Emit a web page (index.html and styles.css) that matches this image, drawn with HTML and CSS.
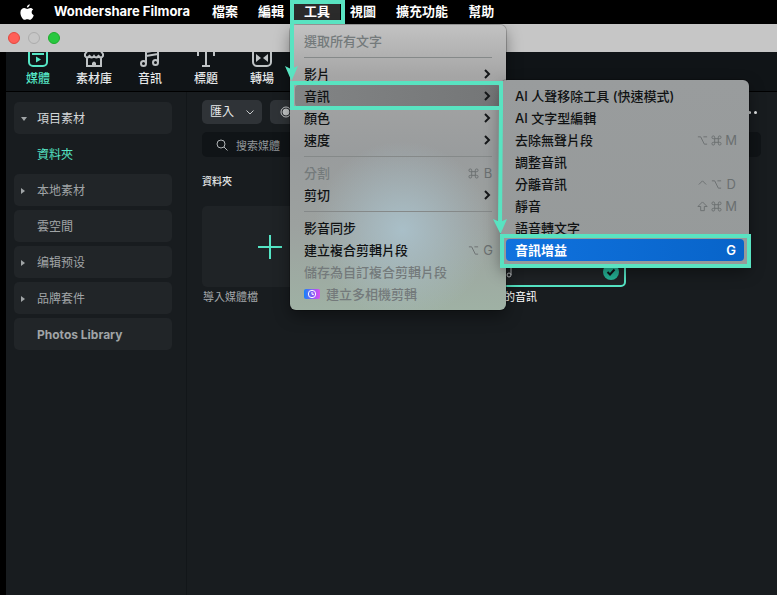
FILE: index.html
```html
<!DOCTYPE html>
<html lang="zh-Hant">
<head>
<meta charset="utf-8">
<title>Wondershare Filmora</title>
<link rel="stylesheet" href="styles.css">
</head>
<body>
<nav class="menubar">
  <svg class="apple" viewBox="0 0 14 17"><path d="M9.8 0.3C9.9 1.6 8.800 3.500 6.900 3.500C6.700 2.100 8 .5 9.800 .3ZM13.200 5.600C11 7 11.300 10.100 13.700 11.200C13.200 12.800 11.700 15.800 10 15.800C8.900 15.800 8.500 15.200 7.300 15.200C6.100 15.200 5.600 15.800 4.600 15.800C2.900 15.800 .4 12.200 .4 8.700C.4 5.600 2.400 4.100 4.300 4.100C5.500 4.100 6.400 4.900 7.200 4.900C8 4.900 9 4 10.500 4C11.500 4 12.600 4.600 13.200 5.600Z"/></svg>
  <button class="app-name">Wondershare Filmora</button>
  <button>檔案</button>
  <button>編輯</button>
  <div class="menu-host">
    <button class="open">工具</button>
    <div class="menu tools">
      <button class="row off">選取所有文字</button>
      <hr>
      <button class="row">影片<svg class="chev" viewBox="0 0 6 10"><path d="M1 1l4 4-4 4"/></svg></button>
      <div class="sub-host">
        <button class="row hover">音訊<svg class="chev" viewBox="0 0 6 10"><path d="M1 1l4 4-4 4"/></svg></button>
        <div class="menu audio">
          <button class="row">AI 人聲移除工具 (快速模式)</button>
          <button class="row">AI 文字型編輯</button>
          <button class="row">去除無聲片段<kbd><svg class="key" viewBox="0 0 12 12"><path d="M1 2h3l4 8h3M7 2h4"/></svg><svg class="key" viewBox="0 0 12 12"><path d="M4 4h4v4H4zM4 4H2.500A1.500 1.500 0 1 1 4 2.500zM8 4V2.500A1.500 1.500 0 1 1 9.500 4zM8 8h1.500A1.500 1.500 0 1 1 8 9.500zM4 8v1.500A1.500 1.500 0 1 1 2.500 8z"/></svg><span>M</span></kbd></button>
          <button class="row">調整音訊</button>
          <button class="row">分離音訊<kbd><svg class="key" viewBox="0 0 12 12"><path d="M2 6l4-4 4 4"/></svg><svg class="key" viewBox="0 0 12 12"><path d="M1 2h3l4 8h3M7 2h4"/></svg><span>D</span></kbd></button>
          <button class="row">靜音<kbd><svg class="key" viewBox="0 0 12 12"><path d="M6 1l5 5H8v4.500H4V6H1z"/></svg><svg class="key" viewBox="0 0 12 12"><path d="M4 4h4v4H4zM4 4H2.500A1.500 1.500 0 1 1 4 2.500zM8 4V2.500A1.500 1.500 0 1 1 9.500 4zM8 8h1.500A1.500 1.500 0 1 1 8 9.500zM4 8v1.500A1.500 1.500 0 1 1 2.500 8z"/></svg><span>M</span></kbd></button>
          <button class="row">語音轉文字</button>
          <button class="row selected">音訊增益<kbd><span>G</span></kbd></button>
        </div>
      </div>
      <button class="row">顏色<svg class="chev" viewBox="0 0 6 10"><path d="M1 1l4 4-4 4"/></svg></button>
      <button class="row">速度<svg class="chev" viewBox="0 0 6 10"><path d="M1 1l4 4-4 4"/></svg></button>
      <hr>
      <button class="row off">分割<kbd><svg class="key" viewBox="0 0 12 12"><path d="M4 4h4v4H4zM4 4H2.500A1.500 1.500 0 1 1 4 2.500zM8 4V2.500A1.500 1.500 0 1 1 9.500 4zM8 8h1.500A1.500 1.500 0 1 1 8 9.500zM4 8v1.500A1.500 1.500 0 1 1 2.500 8z"/></svg><span>B</span></kbd></button>
      <button class="row">剪切<svg class="chev" viewBox="0 0 6 10"><path d="M1 1l4 4-4 4"/></svg></button>
      <hr>
      <button class="row">影音同步</button>
      <button class="row">建立複合剪輯片段<kbd><svg class="key" viewBox="0 0 12 12"><path d="M1 2h3l4 8h3M7 2h4"/></svg><span>G</span></kbd></button>
      <button class="row off">儲存為自訂複合剪輯片段</button>
      <button class="row off"><svg class="multicam" viewBox="0 0 16 10"><defs><linearGradient id="mc"><stop stop-color="#1482fa"/><stop offset=".5" stop-color="#8060f5"/><stop offset="1" stop-color="#e04df0"/></linearGradient></defs><rect width="16" height="10" rx="2" fill="url(#mc)"/><circle cx="8" cy="5" r="3.700" fill="none" stroke="#fff"/><path d="M8 3v2.300h2" fill="none" stroke="#fff"/></svg>建立多相機剪輯</button>
    </div>
    <svg class="guides" viewBox="0 0 470 275">
      <g fill="none" stroke="#59e3c1" stroke-width="4">
        <path d="M2 2h51v20H2zM2 20v52M2 83h209v25H2zM211 106l-1 120M212 236h247v30H212z"/>
      </g>
      <path fill="#59e3c1" d="M-5 66l6 3 7-3-6.500 15zM203 219l7 3 7-3-6.500 15z"/>
    </svg>
  </div>
  <button>視圖</button>
  <button>擴充功能</button>
  <button>幫助</button>
</nav>
<header class="titlebar"><i class="light close"></i><i class="light"></i><i class="light zoom"></i></header>
<div class="app">
  <nav class="tabs">
    <button class="tab active"><svg viewBox="0 0 22 20"><rect x="2" y="1" width="18" height="17" rx="4"/><path d="M5 6h12"/><path class="solid" d="M9 8.500l5 3-5 3z"/></svg>媒體</button>
    <button class="tab"><svg viewBox="0 0 22 20"><path d="M4 9v9h14V9M5 2h12l3 4v2q-2 3-4.500 0Q13 11 11 8 9 11 6.500 8 4 11 2 8V6z"/><path class="solid" d="M9 18v-3q2-3 4 0v3z"/></svg>素材庫</button>
    <button class="tab"><svg viewBox="0 0 22 20"><path d="M7 15V4l12-2v12M7 8l12-2"/><circle cx="4.500" cy="15.500" r="2.500"/><circle cx="16.500" cy="14.500" r="2.500"/></svg>音訊</button>
    <button class="tab"><svg viewBox="0 0 22 20"><path d="M3 8V3h16v5M11 3v15M7 18h8"/></svg>標題</button>
    <button class="tab"><svg viewBox="0 0 22 20"><rect x="2" y="1" width="18" height="17" rx="4"/><path class="solid" d="M5 6l5 4-5 4zM17 6l-5 4 5 4z"/></svg>轉場</button>
  </nav>
  <div class="body">
    <aside class="sidebar">
      <button class="folder lit"><i class="tri down"></i>項目素材</button>
      <button class="folder current"><i class="tri none"></i>資料夾</button>
      <button class="folder"><i class="tri"></i>本地素材</button>
      <button class="folder"><i class="tri none"></i>雲空間</button>
      <button class="folder"><i class="tri"></i>编辑预设</button>
      <button class="folder"><i class="tri"></i>品牌套件</button>
      <button class="folder latin"><i class="tri none"></i>Photos Library</button>
    </aside>
    <main class="library">
      <div class="actions">
        <button class="chip">匯入<svg viewBox="0 0 8 5"><path d="M.5.500L4 4 7.500.500"/></svg></button>
        <button class="chip record" aria-label="錄製"><svg viewBox="0 0 12 12"><circle cx="6" cy="6" r="5"/><circle class="dot" cx="6" cy="6" r="3"/></svg></button>
        <button class="more" aria-label="更多"><i></i><i></i><i></i></button>
      </div>
      <label class="search"><svg viewBox="0 0 12 12"><circle cx="5" cy="5" r="4"/><path d="M8 8l3.500 3.500"/></svg><input type="text" placeholder="搜索媒體"></label>
      <h2>資料夾</h2>
      <div class="grid">
        <figure><div class="thumb add"><svg viewBox="0 0 24 24"><path d="M0 12h24M12 0v24"/></svg></div><figcaption>導入媒體檔</figcaption></figure>
        <figure></figure>
        <figure class="clip"><div class="thumb"><svg class="note" viewBox="0 0 8 10"><circle cx="3" cy="7" r="2"/><path d="M5 7V0"/></svg><svg class="check" viewBox="0 0 16 16"><circle cx="8" cy="8" r="8"/><path d="M4.500 8l2.500 2.500 4.500-5"/></svg></div><figcaption>我的音訊</figcaption></figure>
      </div>
    </main>
  </div>
</div>
</body>
</html>
```
FILE: styles.css
```css
* { box-sizing: border-box; }
body {
  margin: 0;
  min-height: 100vh;
  display: flex;
  flex-direction: column;
  background: #000;
  color: #e6e8e9;
  font: 12px/16px Inter, "Noto Sans CJK TC", sans-serif;
  overflow: hidden;
}
button { margin: 0; padding: 0; border: 0; background: none; color: inherit; font: inherit; text-align: left; white-space: nowrap; }
svg { flex: none; overflow: visible; }

.menubar { display: flex; align-items: center; height: 24px; padding-left: 20px; font-size: 13px; font-weight: 700; color: #fff; }
.menubar > button { padding: 0 10px 2px; }
.menubar > .app-name { padding-right: 12px; }
.apple { width: 14px; height: 17px; margin-right: 10px; fill: #fff; }
.menu-host { position: relative; height: 24px; padding: 3px 0; }
.open { padding: 0 10px 2px; background: #2b2b2b; }

.menu { position: absolute; z-index: 2; padding: 5px; border-radius: 6px; color: #101213; font-weight: 500; box-shadow: 0 0 0 1px #0003, 0 6px 16px #0006; }
.tools {
  top: 25px; left: -4px; width: 216px;
  background: radial-gradient(circle at 52% 72%, #a9bfc8 0, #a9bfc800 38%), linear-gradient(#c2c2c2 0, #a5a5a5 18%, #999c9d 45%, #9ca19f 70%, #9fb1a4 100%);
}
.audio { top: -5px; left: 206px; width: 248px; background: linear-gradient(#999c9d, #969a9a); }
.row { display: flex; align-items: center; width: 100%; height: 22px; padding: 0 9px; border-radius: 4px; }
.row.off { color: #747a7b; }
.row.hover { background: linear-gradient(90deg, #828485, #747677); }
.row.selected { background: linear-gradient(90deg, #1072de, #0864c9); color: #fff; font-weight: 700; }
.menu hr { height: 1px; margin: 5px 9px; border: 0; background: #858989; }
.chev { width: 6px; height: 10px; margin-left: auto; margin-right: 2px; fill: none; stroke: #151719; stroke-width: 2; }
kbd { display: flex; align-items: center; gap: 3px; margin-left: auto; margin-right: -2px; font: inherit; font-weight: 400; color: #6a6f70; }
.key { width: 11px; height: 11px; fill: none; stroke: currentColor; }
kbd span { width: 12px; text-align: center; }
.selected kbd { color: #fff; font-weight: 600; }
.sub-host { position: relative; }
.multicam { width: 16px; height: 10px; margin-right: 6px; }
.guides { position: absolute; z-index: 3; top: 0; left: -4px; width: 470px; height: 275px; pointer-events: none; }

.titlebar { display: flex; align-items: center; gap: 8px; height: 28px; padding-left: 8px; background: #c6c6c6; }
.light { width: 12px; height: 12px; border: 1px solid #acacac; border-radius: 50%; }
.close { background: #ff5f57; border-color: #e2483f; }
.zoom { background: #28c840; border-color: #1dac2c; }

.app { flex: 1; display: flex; flex-direction: column; margin-left: 6px; background: #181c1f; }
.tabs { display: flex; height: 40px; padding-left: 4px; background: #101417; border-bottom: 1px solid #000; overflow: hidden; }
.tab { display: flex; flex-direction: column; align-items: center; gap: 3px; width: 56px; margin-top: -4px; font-weight: 500; }
.tab svg { width: 22px; height: 20px; fill: none; stroke: #bfc3c5; stroke-width: 2; }
.tab .solid { fill: #bfc3c5; stroke: none; }
.tab.active { color: #55e5c5; }
.tab.active svg { stroke: #55e5c5; }
.tab.active .solid { fill: #55e5c5; }

.body { flex: 1; display: flex; }
.sidebar { display: flex; flex-direction: column; gap: 4px; width: 181px; padding: 10px 14px 0 8px; border-right: 1px solid #121619; }
.folder { display: flex; align-items: center; height: 32px; padding: 2px 0 0 7px; border-radius: 5px; background: #212528; color: #a0a4a6; }
.folder.lit { color: #d3d6d7; }
.folder.current { background: none; color: #55e5c5; }
.folder.latin { font-weight: 700; }
.tri { width: 6px; margin-right: 10px; border: solid transparent; border-width: 3px 0 3px 4px; border-left-color: #a0a4a6; }
.tri.down { border-width: 4px 3px 0; border-color: #a0a4a6 transparent; }
.tri.none { border-color: transparent; }

.library { flex: 1; min-width: 0; padding: 8px 16px 0 15px; }
.actions { display: flex; gap: 8px; }
.chip { display: flex; align-items: center; gap: 12px; height: 24px; padding: 0 8px; border-radius: 5px; background: #2f3337; }
.chip svg { width: 8px; height: 5px; fill: none; stroke: #c6c9ca; }
.record { padding: 0 10px; }
.record svg { width: 12px; height: 12px; }
.record .dot { fill: #c6c9ca; }
.more { display: flex; align-items: center; gap: 3px; margin-left: auto; padding-right: 4px; }
.more i { width: 3px; height: 3px; border-radius: 50%; background: #e6e8e9; }
.search { display: flex; align-items: center; gap: 8px; height: 25px; margin-top: 8px; padding-left: 14px; border-radius: 5px; background: #101417; }
.search svg { width: 12px; height: 12px; fill: none; stroke: #b0b4b6; }
.search input { flex: 1; padding: 2px 0 0; border: 0; background: none; font: inherit; font-size: 11px; color: inherit; }
.search ::placeholder { color: #92979a; opacity: 1; }
h2 { margin: 16px 0 17px; font-size: 10px; line-height: 16px; font-weight: 500; }
.grid { display: grid; grid-template-columns: repeat(auto-fill, 136px); gap: 8px; }
figure { margin: 0; }
.thumb { display: flex; align-items: center; justify-content: center; height: 81px; border-radius: 5px; background: #1f2326; }
.add svg { width: 24px; height: 24px; stroke: #55e5c5; stroke-width: 2; }
figcaption { margin-top: 2px; padding-left: 1px; font-size: 11px; line-height: 16px; color: #a5a9ab; }
.clip .thumb { border: 2px solid #55e5c5; align-items: flex-end; justify-content: space-between; padding: 5px 5px 5px 14px; }
.note { width: 8px; height: 14px; fill: none; stroke: #c6c9ca; }
.check { width: 16px; height: 16px; fill: #25b497; }
.check path { fill: none; stroke: #101417; stroke-width: 2; }
.clip figcaption { padding-left: 3px; color: #fff; }
```
